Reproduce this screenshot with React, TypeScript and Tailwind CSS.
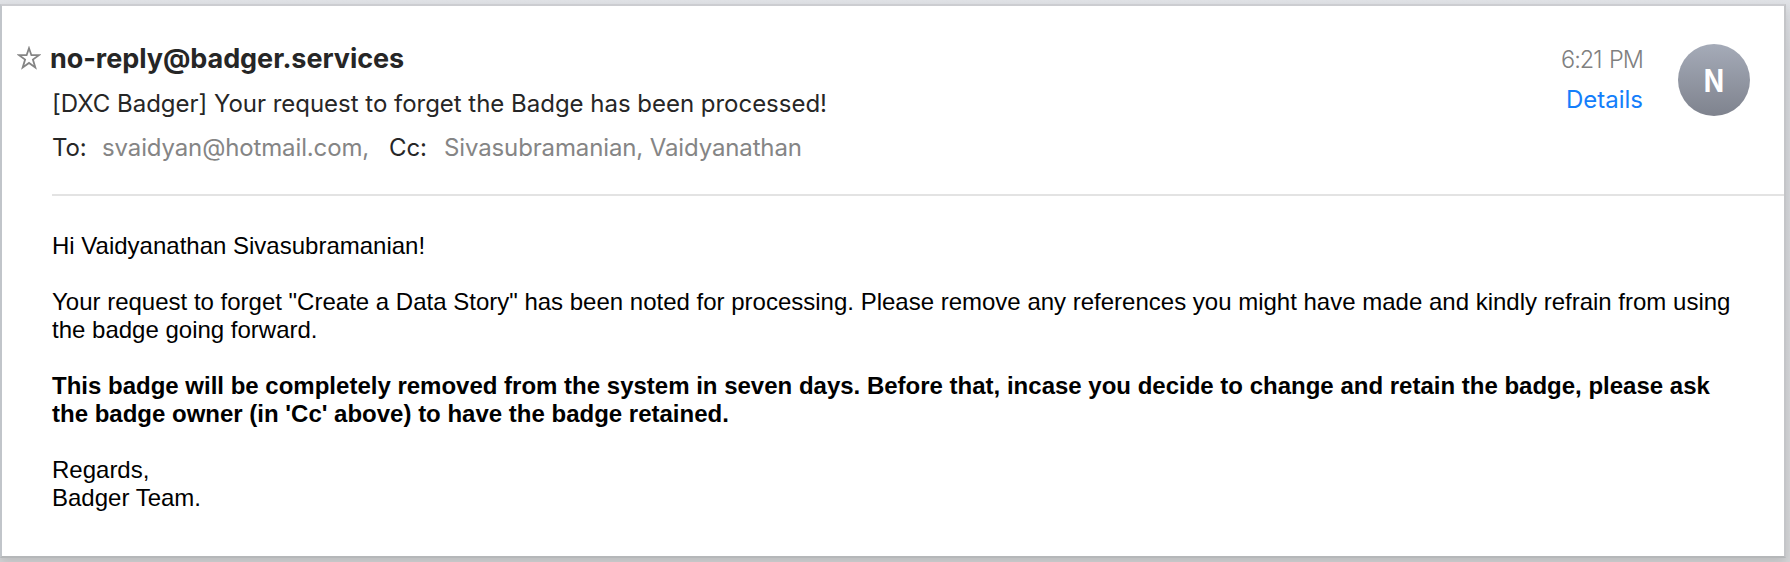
export default function App() {
  return (
    <div className="h-[562px] w-full overflow-hidden bg-[linear-gradient(180deg,#e0e2e6_0px,#d6d8dc_50px,#d5d6d8_100%)] pt-1">
      <article className="h-[554px] w-[1786px] border-2 border-t-[#cccdd1] border-r-[#c4c5c8] border-b-[#b5b7b9] border-l-[#c1c5ca] bg-white shadow-[0_5px_10px_rgba(0,0,0,0.12)]">
        <header className="flex h-[188px] justify-between pl-[15px] font-['Inter',sans-serif] text-[#262626]">
          <div className="flex pt-10">
            <svg className="h-6 w-6 shrink-0" viewBox="0 0 24 24" fill="none" stroke="#858585" strokeWidth="1.8">
              <path d="M12 2.2 14.4 9.2H22L15.9 13.6 18.3 21.4 12 16.9 5.7 21.4 8.1 13.6 2 9.2H9.6Z" />
            </svg>
            <div className="pl-[9px] whitespace-nowrap">
              <h1 className="-mt-[10px] h-[45px] text-[27px] leading-[45px] font-bold tracking-[-0.05px]">no-reply@badger.services</h1>
              <p className="mt-px h-11 pl-0.5 text-[24px] leading-[44px] tracking-[-0.02px]">[DXC Badger] Your request to forget the Badge has been processed!</p>
              <div className="flex h-11 pl-0.5 text-[24px] leading-[44px] tracking-[-0.13px]">
                <span className="w-[50px]">To:</span>
                <span className="w-[287px] text-[#858585]">svaidyan@hotmail.com,</span>
                <span className="w-[55px]">Cc:</span>
                <span className="text-[#858585]">Sivasubramanian, Vaidyanathan</span>
              </div>
            </div>
          </div>
          <div className="flex gap-[35px] pr-[34px]">
            <div className="flex flex-col items-end pt-[34px] text-[24px] leading-10 whitespace-nowrap">
              <time className="text-[23.5px] font-light tracking-[-1px] text-[#808080] [word-spacing:2px]">6:21 PM</time>
              <a className="text-[#147efb]">Details</a>
            </div>
            <div className="mt-[38px] flex h-[72px] w-[72px] items-center justify-center rounded-full bg-linear-to-b from-[#a5abb8] to-[#7f838e] text-[31px] font-bold text-white">
              <span className="scale-x-[0.86] translate-y-px">N</span>
            </div>
          </div>
        </header>
        <div className="ml-[50px] h-0.5 bg-[#e3e3e3]" />
        <main className="pt-9 pl-[50px] font-['Liberation_Sans',sans-serif] text-[24px] leading-7 whitespace-nowrap text-black">
          <p>Hi Vaidyanathan Sivasubramanian!</p>
          <p className="mt-7">
            Your request to forget "Create a Data Story" has been noted for processing. Please remove any references you might have made and kindly refrain from using
            <br />
            the badge going forward.
          </p>
          <p className="mt-7 font-bold">
            This badge will be completely removed from the system in seven days. Before that, incase you decide to change and retain the badge, please ask
            <br />
            the badge owner (in 'Cc' above) to have the badge retained.
          </p>
          <p className="mt-7">
            Regards,
            <br />
            Badger Team.
          </p>
        </main>
      </article>
    </div>
  );
}
